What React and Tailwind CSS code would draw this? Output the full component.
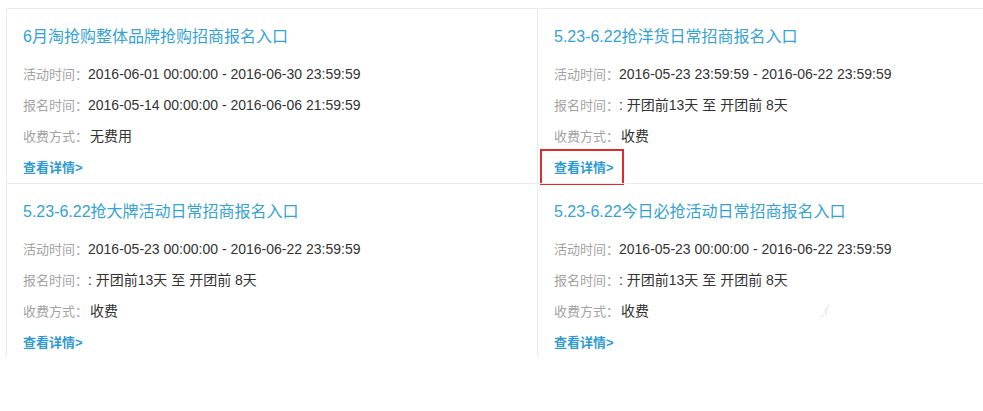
const cards = [
  {
    title: "6月淘抢购整体品牌抢购招商报名入口",
    active: "2016-06-01 00:00:00 - 2016-06-30 23:59:59",
    signup: "2016-05-14 00:00:00 - 2016-06-06 21:59:59",
    fee: "无费用",
  },
  {
    title: "5.23-6.22抢洋货日常招商报名入口",
    active: "2016-05-23 23:59:59 - 2016-06-22 23:59:59",
    signup: ": 开团前13天 至 开团前 8天",
    fee: "收费",
    marked: true,
  },
  {
    title: "5.23-6.22抢大牌活动日常招商报名入口",
    active: "2016-05-23 00:00:00 - 2016-06-22 23:59:59",
    signup: ": 开团前13天 至 开团前 8天",
    fee: "收费",
  },
  {
    title: "5.23-6.22今日必抢活动日常招商报名入口",
    active: "2016-05-23 00:00:00 - 2016-06-22 23:59:59",
    signup: ": 开团前13天 至 开团前 8天",
    fee: "收费",
    stray: true,
  },
];

const font = {
  fontFamily: '"Liberation Sans", "Noto Sans CJK SC", sans-serif',
};

function Row({ label, value, gap }) {
  return (
    <div className="flex items-center h-[31px] whitespace-nowrap">
      <span className="text-[13px] text-[#a3a3a3]">{label}</span>
      <span className={"text-[14px] text-[#333] " + (gap ? "ml-[2px]" : "")}>
        {value}
      </span>
    </div>
  );
}

function Card({ card, bottom }) {
  return (
    <div
      className={
        "relative border-l border-t border-[#ececec] pl-[16px] pt-[17px] " +
        (bottom ? "h-[174px]" : "h-[175px]")
      }
    >
      <h2 className="text-[16px] leading-[22px] text-[#35a2d6] whitespace-nowrap">
        {card.title}
      </h2>
      <div className="mt-[11px]">
        <Row label="活动时间：" value={card.active} />
        <Row label="报名时间：" value={card.signup} />
        <Row label="收费方式：" value={card.fee} gap />
        <div className="flex items-center h-[31px]">
          <a className="relative text-[13px] font-bold text-[#2e9ad2] whitespace-nowrap">
            查看详情&gt;
            {card.marked && (
              <span className="absolute -left-[14px] -right-[10px] -top-[9px] -bottom-[8px] border-2 border-[#df2a2f]" />
            )}
          </a>
        </div>
      </div>
      {card.stray && (
        <svg
          className="absolute left-[280px] top-[120px]"
          width="16"
          height="16"
          viewBox="0 0 16 16"
          fill="none"
        >
          <path d="M11 2 C 8 4, 7 7, 8 11" stroke="#d6d6d6" strokeWidth="1" />
          <path d="M2 13 L 6 11" stroke="#e3e3e3" strokeWidth="1" />
        </svg>
      )}
    </div>
  );
}

export default function App() {
  return (
    <div className="w-[983px] h-[411px] bg-white overflow-hidden pl-[6px] pt-[8px]" style={font}>
      <div className="grid grid-cols-[531px_1fr]">
        {cards.map((c, i) => (
          <Card key={i} card={c} bottom={i > 1} />
        ))}
      </div>
    </div>
  );
}
